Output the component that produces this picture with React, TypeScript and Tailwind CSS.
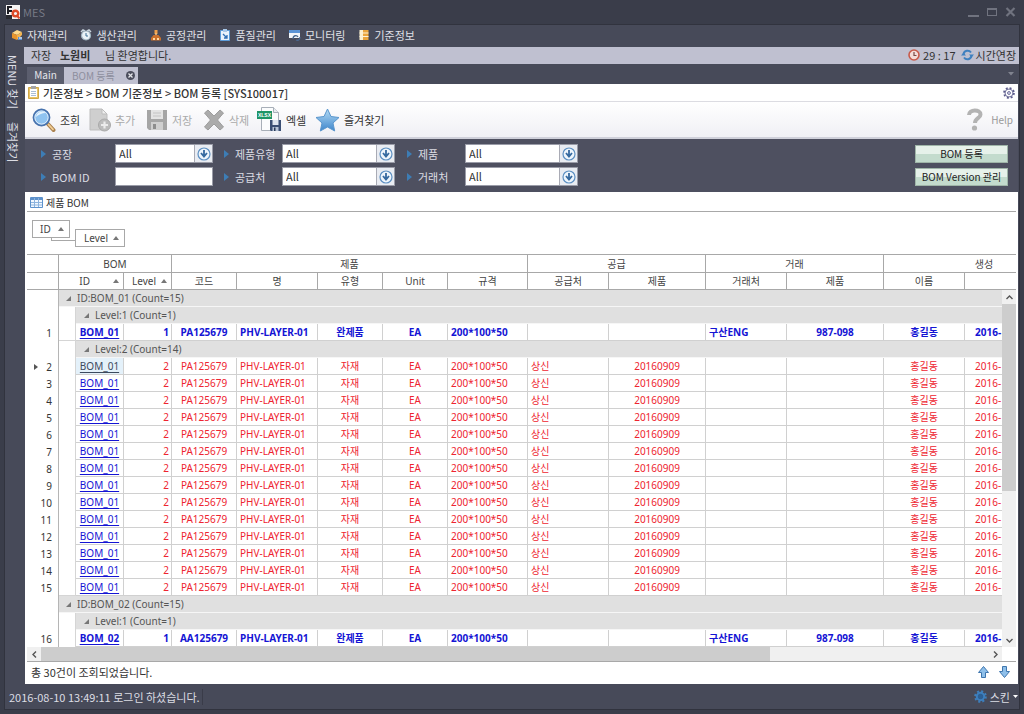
import type { ReactNode } from "react";

/* ---------- icons ---------- */

const Logo = () => (
  <svg width="14" height="14" viewBox="0 0 14 14">
    <path d="M0 0h14v14H0z" fill="#f6f4f4" />
    <path d="M1 1h5v2H3v2h3v2H3v2H1z" fill="#1c1c22" />
    <path d="M0 10h6v4H0z" fill="#2a2a30" />
    <circle cx="9.500" cy="8.500" r="2.800" fill="none" stroke="#dd4a28" strokeWidth="2.400" />
    <path d="M10.500 10l3 3.500" stroke="#dd4a28" strokeWidth="2" />
  </svg>
);

const BoxIcon = () => (
  <svg width="12" height="12" viewBox="0 0 12 12">
    <path d="M1 4l5-3 5 2-5 3z" fill="#ffd98a" />
    <path d="M1 4l5 2v5L1 9z" fill="#e8952c" />
    <path d="M6 6l5-3v3L6 11z" fill="#f3b451" />
    <path d="M7 8h4v3H7z" fill="#5a8fd0" />
    <path d="M8 9h3" stroke="#fff" />
  </svg>
);

const AlarmIcon = () => (
  <svg width="12" height="12" viewBox="0 0 12 12">
    <path d="M1 3l2-2 2 1M11 3L9 1 7 2" stroke="#c8d4dc" strokeWidth="1.500" fill="none" />
    <circle cx="6" cy="6.500" r="4.500" fill="#eaf3f7" stroke="#9fb4c0" strokeWidth="1.200" />
    <path d="M6 4v3h2" stroke="#3d6f92" fill="none" />
  </svg>
);

const ProcessIcon = () => (
  <svg width="12" height="12" viewBox="0 0 12 12">
    <path d="M4.500 1h3v4h-3z" fill="#f0a04a" />
    <path d="M6 4v3" stroke="#f4c27c" strokeWidth="1.500" />
    <path d="M3.500 6h5l2.500 3v2.500H1V9z" fill="#c9702c" />
    <path d="M3 9h2v2H3zM7 9h2v2H7z" fill="#ffd9a0" />
  </svg>
);

const QualityIcon = () => (
  <svg width="12" height="12" viewBox="0 0 12 12">
    <path d="M1.500 1.500h9v10h-9z" fill="#e8f2fb" stroke="#5b9bd8" />
    <path d="M4 0h4v3H4z" fill="#a8c8e8" />
    <path d="M4 5l4 4M8 6v3H5" stroke="#2f6fb5" strokeWidth="1.300" fill="none" />
  </svg>
);

const MonitorIcon = () => (
  <svg width="12" height="12" viewBox="0 0 12 12">
    <path d="M0 1h11v8H0z" fill="#f2f6fa" />
    <path d="M0 1h11v3H0z" fill="#5b94d6" />
    <path d="M4 10c0-4 4-4 5-2M7 11c3 1 4-1 4-3" stroke="#4a6a92" strokeWidth="1.300" fill="none" />
  </svg>
);

const DataIcon = () => (
  <svg width="12" height="12" viewBox="0 0 12 12">
    <path d="M1.500 1h4v10h-4z" fill="#fdf0cf" />
    <path d="M5 1h5.500v10H5z" fill="#eba53c" />
    <path d="M1.500 4h9M1.500 7.500h9" stroke="#fff3d8" />
  </svg>
);

const ClockIcon = () => (
  <svg width="12" height="12" viewBox="0 0 12 12">
    <circle cx="6" cy="6" r="5" fill="#f3dcd8" stroke="#c85a4a" strokeWidth="1.600" />
    <path d="M6 3v3.500h2.500" stroke="#7a4a48" strokeWidth="1.200" fill="none" />
  </svg>
);

const RefreshIcon = () => (
  <svg width="13" height="12" viewBox="0 0 13 12">
    <path d="M2.500 5a4.200 4.200 0 0 1 7.500-1.500" stroke="#3f80bf" strokeWidth="2" fill="none" />
    <path d="M8 5.500h5L10.500 8.500z" fill="#3f80bf" />
    <path d="M10.500 7a4.200 4.200 0 0 1-7.500 1.500" stroke="#3f80bf" strokeWidth="2" fill="none" />
    <path d="M0 6.500h5L2.500 3.500z" fill="#3f80bf" />
  </svg>
);

const ClipboardIcon = () => (
  <svg width="11" height="13" viewBox="0 0 11 13">
    <path d="M.5 1.500h10v11H.5z" fill="#e9c468" stroke="#d0a848" />
    <path d="M2 3h7v8H2z" fill="#fff" />
    <path d="M3 0h5v3H3z" fill="#a5a5a5" />
    <path d="M3 5.500h5M3 7.500h5M3 9.500h5" stroke="#a9bed6" />
  </svg>
);

const SettingsIcon = () => (
  <svg width="12" height="12" viewBox="0 0 14 14">
    <circle cx="7" cy="7" r="5.700" fill="none" stroke="#5c5c8c" strokeWidth="2.200" strokeDasharray="2.240 2.240" />
    <circle cx="7" cy="7" r="4.600" fill="#fff" stroke="#5c5c8c" strokeWidth="1" />
    <circle cx="7" cy="7" r="1.700" fill="#dde" stroke="#5c5c8c" />
  </svg>
);

const SkinIcon = () => (
  <svg width="13" height="13" viewBox="0 0 14 14">
    <circle cx="7" cy="7" r="5.700" fill="none" stroke="#3d7fbd" strokeWidth="2.200" strokeDasharray="2.240 2.240" />
    <circle cx="7" cy="7" r="4" fill="#2c5f94" stroke="#3d7fbd" strokeWidth="2.200" />
  </svg>
);

const SearchIcon = () => (
  <svg width="24" height="24" viewBox="0 0 24 24">
    <path d="M15 15l6.500 7" stroke="#a9804e" strokeWidth="4" strokeLinecap="round" />
    <path d="M16.500 16.500l4.500 4.800" stroke="#f3cf95" strokeWidth="1.800" strokeLinecap="round" />
    <circle cx="9.500" cy="9.500" r="8" fill="#8fc3f0" stroke="#4873ae" strokeWidth="1.800" />
    <circle cx="9.500" cy="9.500" r="6.600" fill="none" stroke="#dcebfa" strokeWidth="1" />
    <path d="M4 9a6 6 0 0 1 10-4C10 5 6 7 4 9z" fill="#e3f2fd" />
  </svg>
);

const AddIcon = () => (
  <svg width="22" height="24" viewBox="0 0 22 24">
    <path d="M1 1h12l5 5v16H1z" fill="#cfcfcf" stroke="#bdbdbd" />
    <path d="M13 1l5 5h-5z" fill="#eee" stroke="#bdbdbd" />
    <circle cx="15.500" cy="17" r="6" fill="#bcbcbc" stroke="#a9a9a9" />
    <path d="M15.500 13.500v7M12 17h7" stroke="#ececec" strokeWidth="2.200" />
  </svg>
);

const SaveIcon = () => (
  <svg width="22" height="22" viewBox="0 0 22 22">
    <path d="M1 1h20v20H3l-2-2z" fill="#a5a5a5" />
    <path d="M5 1h12v9H5z" fill="#e4e4e4" />
    <path d="M7 4h8M7 7h8" stroke="#c4c4c4" />
    <path d="M5 13h12v8H5z" fill="#cfcfcf" />
    <path d="M7 15h3v5H7z" fill="#8d8d8d" />
  </svg>
);

const DeleteIcon = () => (
  <svg width="22" height="22" viewBox="0 0 22 22">
    <path d="M1.500 4L5 1l6 6 6-6 3.500 3-6 7 6 7-3.500 3-6-6-6 6-3.500-3 6-7z" fill="#ababab" stroke="#9d9d9d" />
  </svg>
);

const ExcelIcon = () => (
  <svg width="25" height="25" viewBox="0 0 25 25">
    <path d="M4.500.5h12l5 5v18h-17z" fill="#fbfcfd" stroke="#a8afb8" />
    <path d="M16.500.5v5h5" fill="#e8ecf0" stroke="#a8afb8" />
    <path d="M0 4h15v8H0z" fill="#1f9467" />
    <text x="7.500" y="10" textAnchor="middle" fontSize="5" fontWeight="700" fill="#fff" fontFamily="Liberation Sans, sans-serif">XLSX</text>
    <path d="M13 13h11v11H14l-1-1z" fill="#3b4f74" />
    <path d="M15.500 13h6v5h-6z" fill="#dfe6f0" />
    <path d="M15.500 20h6v4h-6z" fill="#b7c4d8" />
    <path d="M17 20.500h1.500V24H17z" fill="#2a3a58" />
  </svg>
);

const StarIcon = () => (
  <svg width="25" height="24" viewBox="0 0 25 24">
    <defs>
      <linearGradient id="star" x1="0" y1="0" x2="0" y2="1">
        <stop offset="0" stopColor="#b4dcf5" />
        <stop offset="1" stopColor="#3f86cc" />
      </linearGradient>
    </defs>
    <path d="M12.500 1l3.500 7.500 8 1-6 5.500 1.700 8-7.200-4-7.200 4L7 15 1 9.500l8-1z" fill="url(#star)" stroke="#5a96cd" strokeLinejoin="round" />
  </svg>
);

const HelpIcon = () => (
  <svg width="17" height="23" viewBox="0 0 17 23">
    <path d="M3 7c0-6 11.500-6 11.500-.5C14.500 10.500 9 10 9 15" fill="none" stroke="#b3b3b3" strokeWidth="4" />
    <circle cx="8.500" cy="20" r="2.600" fill="#b3b3b3" />
  </svg>
);

const GridIcon = () => (
  <svg width="13" height="11" viewBox="0 0 13 11">
    <path d="M.5.5h12v10H.5z" fill="#f2f8ff" stroke="#5e92cc" />
    <path d="M1 1h11v2H1z" fill="#5e92cc" />
    <path d="M1 5.500h11M1 8h11M4.500 1v9M8.500 1v9" stroke="#8db4de" />
  </svg>
);

const DropIcon = () => (
  <svg width="14" height="14" viewBox="0 0 14 14">
    <circle cx="7" cy="7" r="6" fill="#eef5fc" stroke="#5c8fc2" strokeWidth="1.200" />
    <path d="M7 3v6M4 6l3 3.500L10 6" stroke="#35699f" strokeWidth="1.800" fill="none" />
  </svg>
);

const SortUp = () => (
  <svg width="6" height="4" viewBox="0 0 6 4" className="shrink-0">
    <path d="M3 0l3 4H0z" fill="#777" />
  </svg>
);

const Expanded = () => (
  <svg width="5" height="5" viewBox="0 0 5 5" className="shrink-0">
    <path d="M5 0v5H0z" fill="#777" />
  </svg>
);

const Bullet = () => (
  <svg width="5" height="8" viewBox="0 0 5 8" className="shrink-0">
    <path d="M0 0l5 4-5 4z" fill="#3d7db5" />
  </svg>
);

const Chevron = ({ d }: { d: string }) => (
  <svg width="7" height="7" viewBox="0 0 7 7">
    <path d={d} fill="none" stroke="#555" strokeWidth="1.400" />
  </svg>
);

const ArrowIcon = ({ down }: { down?: boolean }) => (
  <svg width="11" height="12" viewBox="0 0 11 12">
    <path
      d={down ? "M3.500.5h4v5h3l-5 6-5-6h3z" : "M3.500 11.500h4v-5h3l-5-6-5 6h3z"}
      fill="#8fc0ea"
      stroke="#3f76ae"
    />
  </svg>
);

/* ---------- data ---------- */

const menus: { label: string; icon: ReactNode }[] = [
  { label: "자재관리", icon: <BoxIcon /> },
  { label: "생산관리", icon: <AlarmIcon /> },
  { label: "공정관리", icon: <ProcessIcon /> },
  { label: "품질관리", icon: <QualityIcon /> },
  { label: "모니터링", icon: <MonitorIcon /> },
  { label: "기준정보", icon: <DataIcon /> },
];

const tools: { label: string; icon: ReactNode; off?: boolean; width: string }[] = [
  { label: "조회", icon: <SearchIcon />, width: "w-[57px]" },
  { label: "추가", icon: <AddIcon />, off: true, width: "w-[57px]" },
  { label: "저장", icon: <SaveIcon />, off: true, width: "w-[57px]" },
  { label: "삭제", icon: <DeleteIcon />, off: true, width: "w-[54px]" },
  { label: "엑셀", icon: <ExcelIcon />, width: "w-[58px]" },
  { label: "즐겨찾기", icon: <StarIcon />, width: "w-[80px]" },
];

type Item = {
  no: number;
  id: string;
  level: number;
  code: string;
  type: string;
  supplier: string;
  supplied: string;
  customer: string;
  sold: string;
};

const top = (no: number, id: string, code: string): Item => ({
  no, id, level: 1, code, type: "완제품", supplier: "", supplied: "", customer: "구산ENG", sold: "987-098",
});

const part = (no: number): Item => ({
  no, id: "BOM_01", level: 2, code: "PA125679", type: "자재", supplier: "상신", supplied: "20160909", customer: "", sold: "",
});

const parts = Array.from({ length: 14 }, (_, i) => part(i + 2));

const headers = ["코드", "명", "유형", "Unit", "규격", "공급처", "제품", "거래처", "제품", "이름", ""];

/* ---------- pieces ---------- */

function Combo({ id, width }: { id: string; width: string }) {
  return (
    <div className={`relative h-[19px] border border-[#9a9ca8] bg-white ${width}`}>
      <select id={id} className="block h-full w-full appearance-none bg-white pb-[2px] pl-[3px] text-[11px] leading-[14px] text-[#333] outline-none">
        <option>All</option>
      </select>
      <span className="pointer-events-none absolute inset-y-0 right-0 flex w-[18px] items-center justify-center border-l border-[#a9abb5] bg-[#e9ecf2]">
        <DropIcon />
      </span>
    </div>
  );
}

function FieldLabel({ id, children, width }: { id: string; children: ReactNode; width: string }) {
  return (
    <label htmlFor={id} className={`flex items-center gap-[6px] text-[#dcdde4] ${width}`}>
      <Bullet />
      {children}
    </label>
  );
}

function TopGroup({ children }: { children: ReactNode }) {
  return (
    <tr className="h-[17px]">
      <td className="border-r border-[#b5b5b5]" />
      <td colSpan={14} className="border-b border-[#f6f6f6] bg-[#e0e0e0] pl-[7px] text-[#555]">
        <div className="flex items-center gap-[6px]"><Expanded />{children}</div>
      </td>
    </tr>
  );
}

function SubGroup({ children }: { children: ReactNode }) {
  return (
    <tr className="h-[17px]">
      <td className="border-r border-[#b5b5b5]" />
      <td className="border-r border-[#d5d5d5]" />
      <td colSpan={13} className="border-b border-[#f6f6f6] bg-[#e0e0e0] pl-[8px] text-[#555]">
        <div className="flex items-center gap-[6px]"><Expanded />{children}</div>
      </td>
    </tr>
  );
}

const cell = "border-b border-r border-[#d0d0d0] overflow-hidden whitespace-nowrap p-0";

function Row({ item, current, last }: { item: Item; current?: boolean; last?: boolean }) {
  const tone = item.level === 1 ? "font-bold text-[#1414d4]" : "text-[#ee2430]";
  return (
    <tr className={`h-[17px] ${tone}`}>
      <td className="border-r border-[#b5b5b5] p-0 font-normal text-[#333]">
        <div className="flex items-center justify-between pl-[7px] pr-[6px]">
          <svg width="4" height="6" viewBox="0 0 4 6">{current && <path d="M0 0l4 3-4 3z" fill="#555" />}</svg>
          {item.no}
        </div>
      </td>
      <td className={`border-r border-[#d5d5d5] ${last ? "border-b" : ""}`} />
      <td className={`${cell} text-center ${current ? "bg-[#e4f1fa]" : ""}`}>
        <a href="#bom" className={`underline underline-offset-2 ${current ? "text-[#3c4a5e]" : "text-[#1414d4]"}`}>{item.id}</a>
      </td>
      <td className={`${cell} pr-[2px] text-right`}>{item.level}</td>
      <td className={`${cell} text-center`}>{item.code}</td>
      <td className={`${cell} pl-[3px]`}>PHV-LAYER-01</td>
      <td className={`${cell} text-center`}>{item.type}</td>
      <td className={`${cell} text-center`}>EA</td>
      <td className={`${cell} pl-[3px]`}>200*100*50</td>
      <td className={`${cell} pl-[3px]`}>{item.supplier}</td>
      <td className={`${cell} text-center`}>{item.supplied}</td>
      <td className={`${cell} pl-[3px]`}>{item.customer}</td>
      <td className={`${cell} text-center`}>{item.sold}</td>
      <td className={`${cell} text-center`}>홍길동</td>
      <td className={`${cell} pl-[10px]`}>2016-</td>
    </tr>
  );
}

const head = "border-b border-r border-[#a8a8a8] p-0 font-normal";

function BomTable() {
  return (
    <table className="w-[1058px] table-fixed border-separate border-spacing-0 font-['Noto_Sans','Noto_Sans_CJK_KR',sans-serif] text-[10px] leading-[16px]">
      <colgroup>
        <col className="w-[32px]" />
        <col className="w-[17px]" />
        <col className="w-[48px]" />
        <col className="w-[48px]" />
        <col className="w-[65px]" />
        <col className="w-[81px]" />
        <col className="w-[65px]" />
        <col className="w-[65px]" />
        <col className="w-[80px]" />
        <col className="w-[81px]" />
        <col className="w-[97px]" />
        <col className="w-[81px]" />
        <col className="w-[97px]" />
        <col className="w-[81px]" />
        <col className="w-[120px]" />
      </colgroup>
      <thead className="text-[#444]">
        <tr className="h-[18px]">
          <th className={head} />
          <th colSpan={3} className={head}>BOM</th>
          <th colSpan={5} className={head}>제품</th>
          <th colSpan={2} className={head}>공급</th>
          <th colSpan={2} className={head}>거래</th>
          <th colSpan={2} className={head}>생성</th>
        </tr>
        <tr className="h-[17px]">
          <th className={head} />
          <th colSpan={2} className={head}>
            <div className="flex items-center justify-end gap-[23px] pr-[4px]">ID<SortUp /></div>
          </th>
          <th className={head}>
            <div className="flex items-center justify-between pl-[8px] pr-[4px]">Level<SortUp /></div>
          </th>
          {headers.map((h, i) => (
            <th key={i} className={head}>{h}</th>
          ))}
        </tr>
      </thead>
      <tbody>
        <TopGroup>ID:BOM_01 (Count=15)</TopGroup>
        <SubGroup>Level:1 (Count=1)</SubGroup>
        <Row item={top(1, "BOM_01", "PA125679")} last />
        <SubGroup>Level:2 (Count=14)</SubGroup>
        {parts.map((p) => (
          <Row key={p.no} item={p} current={p.no === 2} last={p.no === 15} />
        ))}
        <TopGroup>ID:BOM_02 (Count=15)</TopGroup>
        <SubGroup>Level:1 (Count=1)</SubGroup>
        <Row item={top(16, "BOM_02", "AA125679")} />
      </tbody>
    </table>
  );
}

const action =
  "h-[18px] w-full border border-[#9fb5a8] bg-linear-to-b from-[#e6f1ea] from-50% to-[#c3dbcd] to-50% text-[10px] leading-[14px] text-[#222]";

/* ---------- page ---------- */

export default function App() {
  return (
    <div className="flex min-h-screen flex-col bg-[#3a3d4a] px-[4px] pb-[4px] font-['Noto_Sans_CJK_KR',sans-serif] text-[11px] leading-[16px] text-[#333]">
      <header className="flex h-[24px] items-center justify-between pl-[2px] pr-[4px]">
        <div className="flex items-center gap-[3px] text-[#777a86]"><Logo />MES</div>
        <div className="flex items-center gap-[8px] text-[#70737f]">
          <button aria-label="Minimize" className="h-[10px] w-[11px] border-b-2 border-[#70737f]" />
          <button aria-label="Maximize" className="h-[8px] w-[10px] border border-t-2 border-[#70737f]" />
          <button aria-label="Close">
            <svg width="11" height="10" viewBox="0 0 11 10"><path d="M1.500 1l8 8M9.500 1l-8 8" stroke="#70737f" strokeWidth="2.200" /></svg>
          </button>
        </div>
      </header>

      <div className="flex flex-1 flex-col border border-[#31333e] bg-[#474a59]">
        <nav className="flex h-[22px] items-center gap-[13px] pb-[2px] pl-[6px]">
          {menus.map((m) => (
            <button key={m.label} className="flex items-center gap-[4px] text-[#e0e1e8]">{m.icon}{m.label}</button>
          ))}
        </nav>

        <div className="flex flex-1">
          <aside className="flex w-[19px] shrink-0 flex-col items-start gap-[13px] pt-[8px]">
            <button className="text-[#dcdde4] [text-orientation:sideways] [writing-mode:vertical-rl]">MENU 찾기</button>
            <button className="text-[#dcdde4] [text-orientation:sideways] [writing-mode:vertical-rl]">즐겨찾기</button>
          </aside>

          <div className="flex min-w-0 flex-1 flex-col">
            <div className="flex h-[17px] items-center justify-between bg-[#bfc0d0] pb-[2px] pl-[7px] pr-[3px]">
              <p className="flex text-[#333]">
                <span className="w-[29px]">자장</span>
                <b className="w-[45px]">노원비</b>
                <span>님 환영합니다.</span>
              </p>
              <div className="flex items-center gap-[3px]">
                <ClockIcon /><span className="mr-[2px]">29 : 17</span>
                <button className="flex items-center gap-[2px]"><RefreshIcon />시간연장</button>
              </div>
            </div>

            <div className="flex h-[20px] items-end pl-[3px] pr-[5px]">
              <button className="h-[17px] w-[37px] bg-[#5b5e6e] pb-[2px] text-[10px] text-[#e4e5ea]">Main</button>
              <div className="flex h-[17px] w-[74px] items-center justify-between bg-[#bfc0d0] pl-[8px] pr-[3px] text-[10px] text-[#8e8f9e]">
                BOM 등록
                <button aria-label="Close tab">
                  <svg width="9" height="9" viewBox="0 0 9 9" className="block">
                    <circle cx="4.500" cy="4.500" r="4.500" fill="#4b4d5c" />
                    <path d="M2.500 2.500l4 4M6.500 2.500l-4 4" stroke="#e4e5ea" strokeWidth="1.300" />
                  </svg>
                </button>
              </div>
              <svg width="6" height="4" viewBox="0 0 6 4" className="mb-[8px] ml-auto"><path d="M0 0h6L3 3.500z" fill="#80838f" /></svg>
            </div>

            <main className="mr-[1px] flex min-w-0 flex-1 flex-col pl-[1px]">
              <div className="flex h-[18px] items-center gap-[4px] border-b border-[#dcdce2] bg-white pl-[3px] pr-[3px]">
                <ClipboardIcon />
                <h1 className="flex-1 font-medium">기준정보 &gt; BOM 기준정보 &gt; BOM 등록 [SYS100017]</h1>
                <button aria-label="Settings"><SettingsIcon /></button>
              </div>

              <div className="flex h-[37px] items-center border-b-2 border-[#cfd0da] bg-linear-to-b from-white to-[#f0f0f5] pl-[7px] pr-[5px]">
                {tools.map((t) => (
                  <button key={t.label} className={`flex shrink-0 items-center gap-[4px] whitespace-nowrap ${t.width} ${t.off ? "text-[#aaa]" : ""}`}>
                    {t.icon}{t.label}
                  </button>
                ))}
                <button className="ml-auto flex items-center gap-[8px] text-[10px] text-[#999]"><HelpIcon />Help</button>
              </div>

              <section className="flex justify-between bg-[#4e5060] pb-[6px] pl-[16px] pr-[10px] pt-[5px]">
                <div className="flex flex-col gap-[4px]">
                  <div className="flex">
                    <FieldLabel id="plant" width="w-[74px]">공장</FieldLabel>
                    <Combo id="plant" width="mr-[11px] w-[98px]" />
                    <FieldLabel id="kind" width="w-[58px]">제품유형</FieldLabel>
                    <Combo id="kind" width="mr-[12px] w-[113px]" />
                    <FieldLabel id="product" width="w-[58px]">제품</FieldLabel>
                    <Combo id="product" width="w-[113px]" />
                  </div>
                  <div className="flex">
                    <FieldLabel id="bomid" width="w-[74px]">BOM ID</FieldLabel>
                    <input id="bomid" className="mr-[11px] h-[19px] w-[98px] border border-[#9a9ca8] bg-white px-[3px] outline-none" />
                    <FieldLabel id="supplier" width="w-[58px]">공급처</FieldLabel>
                    <Combo id="supplier" width="mr-[12px] w-[113px]" />
                    <FieldLabel id="customer" width="w-[58px]">거래처</FieldLabel>
                    <Combo id="customer" width="w-[113px]" />
                  </div>
                </div>
                <div className="flex w-[93px] flex-col gap-[5px] pt-[1px]">
                  <button className={action}>BOM 등록</button>
                  <button className={action}>BOM Version 관리</button>
                </div>
              </section>

              <section className="flex min-w-0 flex-1 flex-col bg-white px-[2px] pt-[2px]">
                <h2 className="flex h-[18px] items-center gap-[3px] border-b border-[#a8a8a8] pl-[3px] text-[10px]"><GridIcon />제품 BOM</h2>

                <div className="flex h-[43px] items-start border-b border-[#a8a8a8] pl-[5px] pt-[8px] font-['Noto_Sans',sans-serif] text-[10px] text-[#444]">
                  <button className="flex h-[18px] w-[38px] items-center justify-between border border-[#a8a8a8] pl-[7px] pr-[5px]">ID<SortUp /></button>
                  <span className="-ml-[19px] mt-[18px] h-[3px] w-[24px] border-b border-l border-[#a8a8a8]" />
                  <button className="mt-[9px] flex h-[18px] w-[50px] items-center justify-between border border-[#a8a8a8] pl-[8px] pr-[5px]">Level<SortUp /></button>
                </div>

                <div className="relative overflow-hidden">
                  <BomTable />
                  <div className="absolute bottom-0 right-0 top-[35px] flex w-[14px] flex-col bg-[#f0f0f0]">
                    <button aria-label="Scroll up" className="flex h-[14px] items-center justify-center"><Chevron d="M.5 5l3-3 3 3" /></button>
                    <div className="h-[187px] bg-[#cdcdcd]" />
                    <button aria-label="Scroll down" className="mt-auto flex h-[14px] items-center justify-center"><Chevron d="M.5 2l3 3 3-3" /></button>
                  </div>
                </div>

                <div className="flex h-[15px] border-b border-[#a8a8a8] pr-[14px]">
                  <div className="flex flex-1 bg-[#f0f0f0]">
                    <button aria-label="Scroll left" className="flex w-[14px] items-center justify-center"><Chevron d="M5 .5l-3 3 3 3" /></button>
                    <div className="flex-1"><div className="h-full w-[77%] bg-[#cdcdcd]" /></div>
                    <button aria-label="Scroll right" className="flex w-[14px] items-center justify-center"><Chevron d="M2 .5l3 3-3 3" /></button>
                  </div>
                </div>

                <div className="flex h-[22px] items-center justify-between pb-[2px] pl-[4px] pr-[6px]">
                  <span>총 30건이 조회되었습니다.</span>
                  <div className="flex gap-[10px]">
                    <button aria-label="Previous"><ArrowIcon /></button>
                    <button aria-label="Next"><ArrowIcon down /></button>
                  </div>
                </div>
              </section>
            </main>
          </div>
        </div>

        <footer className="flex h-[25px] items-center justify-between pl-[4px] pr-[1px] text-[#dcdde4]">
          <span className="border-r border-[#3a3c49] pr-[2px]">2016-08-10 13:49:11 로그인 하셨습니다.</span>
          <button className="flex items-center gap-[3px]">
            <SkinIcon />스킨
            <svg width="5" height="3" viewBox="0 0 5 3"><path d="M0 0h5L2.500 3z" fill="#fff" /></svg>
          </button>
        </footer>
      </div>
    </div>
  );
}
